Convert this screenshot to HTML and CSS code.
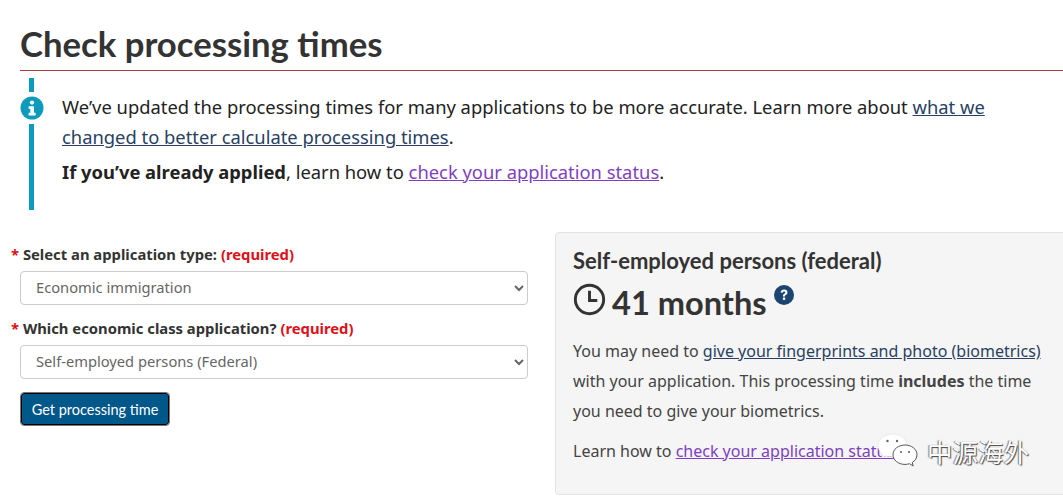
FILE: index.html
```html
<!DOCTYPE html>
<html lang="en">

<head>
    <meta charset="UTF-8">
    <meta name="viewport" content="width=device-width, initial-scale=1.0">
    <title>Check processing times</title>
    <link rel="stylesheet" href="styles.css">
</head>

<body>
    <h1 class="title">Check processing times</h1>

    <div class="alert">
        <svg class="alert-icon" viewBox="0 0 24 24" width="24" height="24">
            <circle cx="12" cy="12" r="11.5" fill="#0d9bbd"></circle>
            <circle cx="12" cy="6.6" r="2.1" fill="#fff"></circle>
            <path d="M8.6 10.2h5.4v6.6h1.6v2.6H8.6v-2.6h1.7v-4H8.6z" fill="#fff"></path>
        </svg>
        <p class="alert-text">We’ve updated the processing times for many applications to be more accurate. Learn more about <a href="#" class="link">what we changed to better calculate processing times</a>.</p>
        <p class="alert-text alert-last"><strong>If you’ve already applied</strong>, learn how to <a href="#" class="visited">check your application status</a>.</p>
    </div>

    <div class="columns">
        <form class="form">
            <label class="field-label"><span class="star">*</span> Select an application type: <span class="required">(required)</span></label>
            <select class="field">
                <option>Economic immigration</option>
            </select>
            <label class="field-label"><span class="star">*</span> Which economic class application? <span class="required">(required)</span></label>
            <select class="field">
                <option>Self-employed persons (Federal)</option>
            </select>
            <button type="button" class="submit">Get processing time</button>
        </form>

        <section class="result">
            <h2 class="result-name">Self-employed persons (federal)</h2>
            <div class="result-time">
                <svg class="clock" viewBox="0 0 34 34" width="33" height="33">
                    <circle cx="17" cy="17" r="14.6" fill="none" stroke="#333" stroke-width="3"></circle>
                    <path d="M17 8v10h8" fill="none" stroke="#333" stroke-width="3"></path>
                </svg>
                <span>41 months</span>
                <svg class="help" viewBox="0 0 20 20" width="20" height="20">
                    <circle cx="10" cy="10" r="10" fill="#1c4471"></circle>
                    <path d="M6.6 7.600c.2-2 1.600-3 3.500-3 2 0 3.400 1.100 3.400 2.800 0 1.300-.8 2-1.700 2.600-.6.4-.8.700-.8 1.500H8.900c0-1.300.3-2 1.300-2.700.7-.5 1-.8 1-1.300 0-.5-.4-.9-1.100-.9-.7 0-1.200.4-1.300 1.200z" fill="#fff"></path>
                    <rect x="8.900" y="12.500" width="2.300" height="2.400" fill="#fff"></rect>
                </svg>
            </div>
            <p class="result-text">You may need to <a href="#" class="link">give your fingerprints and photo (biometrics)</a> with your application. This processing time <strong>includes</strong> the time you need to give your biometrics.</p>
            <p class="result-text result-last">Learn how to <a href="#" class="visited">check your application status</a>.</p>
        </section>
    </div>

    <div class="watermark">
        <svg class="wechat" viewBox="0 0 42 36" width="42" height="36">
            <path d="M16 1C8 1 1 6 1 12.500c0 3.500 1.800 6.500 4.600 8.600L4.500 25l4.400-2.200c1.900.6 3.900.9 6.100.9 8 0 15-5 15-11.200S24 1 16 1z" fill="#fff" stroke="#ddd" stroke-width=".6"></path>
            <path d="M28 12c-6.600 0-12 4.300-12 9.700s5.400 9.700 12 9.700c1.600 0 3.100-.3 4.500-.7l3.700 2.300-1-3.500c2.900-1.800 4.800-4.600 4.800-7.800C40 16.300 34.600 12 28 12z" fill="#fff" stroke="#555" stroke-width="1"></path>
            <circle cx="10.500" cy="8" r="1.200" fill="#666"></circle>
            <circle cx="20" cy="8" r="1.200" fill="#666"></circle>
            <circle cx="24" cy="19" r="1.100" fill="#666"></circle>
            <circle cx="32" cy="19" r="1.100" fill="#666"></circle>
        </svg>
        <span class="watermark-text">中源海外</span>
    </div>
</body>

</html>
```

FILE: styles.css
```css
* {
    margin: 0;
    padding: 0;
    box-sizing: border-box;
}

body {
    position: relative;
    height: 498px;
    overflow: hidden;
    background: #fff;
    color: #333;
    font-family: "Noto Sans", "Liberation Sans", sans-serif;
    font-size: 16px;
}

.title {
    margin: 0 0 7px 20px;
    padding-top: 21px;
    height: 71px;
    border-bottom: 1px solid #af3c43;
    font-family: Lato, "Liberation Sans", sans-serif;
    font-size: 34.7px;
    line-height: 46px;
    font-weight: 700;
}

.alert {
    position: relative;
    margin-left: 29px;
    height: 132px;
    padding: 14px 0 0 28px;
    border-left: 5px solid #0d9bbd;
    color: #222;
}

.alert-icon {
    position: absolute;
    left: -14px;
    top: 14px;
    background: #fff;
    box-sizing: content-box;
    border-top: 4px solid #fff;
    border-bottom: 4px solid #fff;
}

.alert-text {
    font-size: 18.37px;
    line-height: 30px;
}

.alert-last {
    margin-top: 5px;
}

.link {
    color: #284162;
}

.visited {
    color: #7f3fc0;
}

.columns {
    display: flex;
    margin-top: 22px;
}

.form {
    width: 528px;
    margin-left: 11px;
    padding-top: 12px;
    flex: none;
}

.field-label {
    display: block;
    font-size: 14.8px;
    line-height: 20px;
    font-weight: 700;
}

.star,
.required {
    color: #dd1018;
}

.field {
    display: block;
    width: 508px;
    height: 34px;
    margin: 7px 0 13px 9px;
    padding: 0 11px 2px;
    background: #fff;
    border: 1px solid #ccc;
    border-radius: 4px;
    color: #666;
    font-family: inherit;
    font-size: 14.7px;
}

.submit {
    display: block;
    width: 148px;
    height: 32px;
    margin: 14px 0 0 10px;
    padding-top: 1px;
    background: #00578a;
    border: 1px solid #000;
    outline: 1px solid #777;
    border-radius: 3px;
    color: #fff;
    font-family: Lato, "Liberation Sans", sans-serif;
    font-size: 14.5px;
}

.result {
    flex: 1;
    height: 263px;
    margin-left: 16px;
    margin-right: -8px;
    padding: 14px 17px;
    background: #f5f5f5;
    border: 1px solid #e3e3e3;
    border-radius: 4px;
}

.result-name {
    font-family: Lato, "Liberation Sans", sans-serif;
    font-size: 22px;
    line-height: 28px;
    font-weight: 700;
}

.result-time {
    display: flex;
    align-items: flex-start;
    margin-top: 7px;
    font-family: Lato, "Liberation Sans", sans-serif;
    font-size: 32.6px;
    line-height: 42px;
    font-weight: 700;
}

.clock {
    margin: 1px 6px 0 0;
}

.help {
    margin: 3px 0 0 7px;
}

.result-text {
    margin-top: 12px;
    font-size: 16px;
    line-height: 30px;
    width: 480px;
    color: #444;
}

.result-last {
    margin-top: 10px;
}

.watermark {
    position: absolute;
    left: 877px;
    top: 432px;
    display: flex;
    align-items: center;
    gap: 8px;
}

.watermark-text {
    color: #fff;
    font-family: "Noto Sans CJK SC", sans-serif;
    font-size: 25.5px;
    text-shadow: 1px 1px 1px #444, -1px 0 1px #777;
}
```
